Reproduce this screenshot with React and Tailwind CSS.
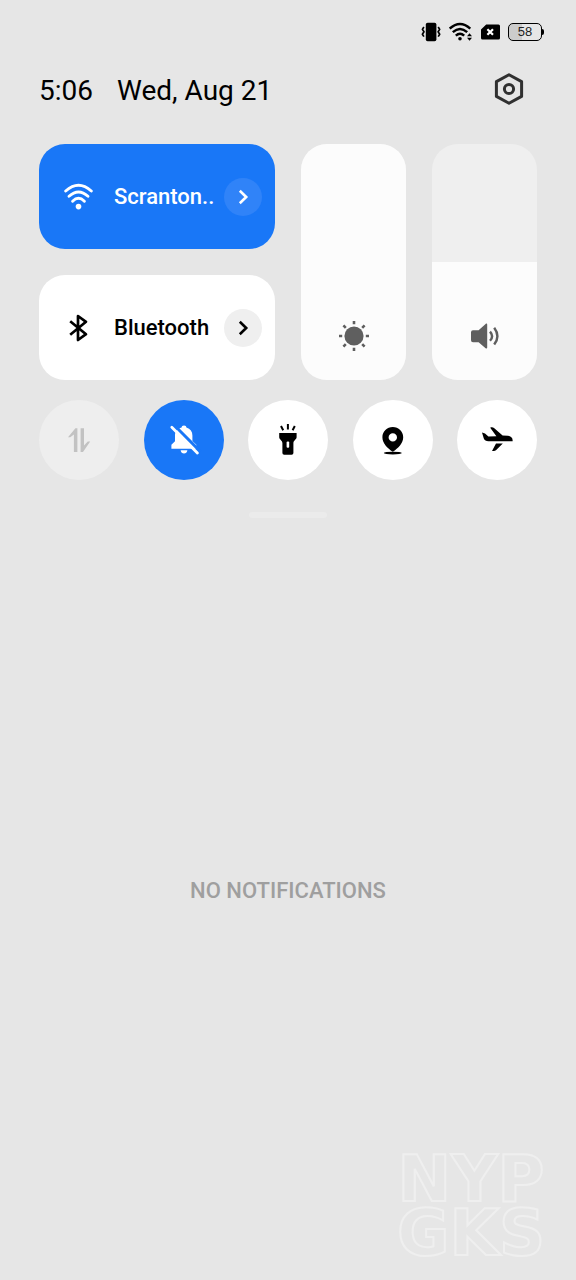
import React, { useState } from 'react';

const VibrateIcon = () => (
    <svg className="w-5 h-5" viewBox="0 0 20 20" fill="none" stroke="black" strokeWidth="1.7" strokeLinejoin="round">
        <rect x="4.8" y="0.8" width="10.6" height="18.4" rx="1.8" fill="black" stroke="none" />
        <path d="M2.9 5 1.4 7.4 3 9.8 1.4 12.2 2.9 14.6" />
        <path d="M17.2 5 18.7 7.4 17.1 9.8 18.7 12.2 17.2 14.6" />
    </svg>
);

const StatusWifiIcon = () => (
    <svg className="w-6 h-5" viewBox="0 0 24 20" fill="none" stroke="black" strokeWidth="2.4">
        <path d="M.7 6.6Q11-2.8 21.3 6.6" />
        <path d="M3.8 10.2Q11 3.6 18.2 10.2" />
        <path d="M6.8 13.6Q11 9.8 15.2 13.6" />
        <circle cx="11" cy="16.8" r="1.8" fill="black" stroke="none" />
        <path d="M18 14.2 20.5 11.2 23 14.2ZM18 15.8 20.5 18.8 23 15.8Z" fill="black" stroke="none" />
    </svg>
);

const NoSimIcon = () => (
    <svg className="w-[19px] h-4" viewBox="0 0 19 16">
        <path d="M5.2.5H17.5A1.5 1.5 0 0 1 19 2V14A1.5 1.5 0 0 1 17.5 15.5H1.5A1.5 1.5 0 0 1 0 14V5.5Z" fill="black" />
        <path d="M6.4 5.2 12 10.8M12 5.2 6.4 10.8" stroke="white" strokeWidth="2.2" />
    </svg>
);

const SettingsIcon = () => (
    <svg className="w-[30px] h-8" viewBox="0 0 30 32" fill="none" stroke="#303030" strokeWidth="3" strokeLinejoin="round">
        <path d="M15 1.8 27.6 8.6V23.4L15 30.2 2.4 23.4V8.6Z" />
        <circle cx="15" cy="16" r="4.6" />
    </svg>
);

const WifiIcon = () => (
    <svg className="w-[30px] h-7" viewBox="0 0 30 28" fill="none" stroke="white" strokeWidth="2.9" strokeLinecap="round">
        <path d="M1.7 8Q14.5-3.6 27.3 8" />
        <path d="M5 13.2Q14.5 4.6 24 13.2" />
        <path d="M8.6 18.2Q14.5 12.4 20.4 18.2" />
        <circle cx="14.5" cy="23.6" r="2.8" fill="white" stroke="none" />
    </svg>
);

const BluetoothIcon = () => (
    <svg className="w-[30px] h-7" viewBox="0 0 30 28" fill="none" stroke="black" strokeWidth="2.7" strokeLinejoin="round">
        <path d="M6.2 7.2 22 20.2 14 26V2L22 7.8 6.2 20.8" />
    </svg>
);

const ChevronIcon = () => (
    <svg className="w-4 h-4" viewBox="0 0 16 16" fill="none" stroke="currentColor" strokeWidth="2.6">
        <path d="M4.8 1.8 11.2 8 4.8 14.2" />
    </svg>
);

const SunIcon = () => (
    <svg className="w-[30px] h-[30px]" viewBox="0 0 30 30" fill="#5f5f5f" stroke="#5f5f5f" strokeWidth="2.6">
        <circle cx="15" cy="15" r="9.6" stroke="none" />
        <path d="M15 0V3.2M15 26.8V30M0 15H3.2M26.8 15H30M4.4 4.4 6.8 6.8M23.2 23.2 25.6 25.6M4.4 25.6 6.8 23.2M23.2 6.8 25.6 4.4" />
    </svg>
);

const SpeakerIcon = () => (
    <svg className="w-[30px] h-[30px]" viewBox="0 0 30 30" fill="#5f5f5f">
        <path d="M3 9.2H8.6L15.6 3C16.4 2.3 17.2 2.6 17.2 3.6V26.6C17.2 27.6 16.4 27.9 15.6 27.2L8.6 21.2H3A2 2 0 0 1 1 19.2V11.2A2 2 0 0 1 3 9.2Z" />
        <path d="M20 10.6Q24.2 15.2 20 19.8M24.2 6.8Q30.6 15.2 24.2 23.6" fill="none" stroke="#5f5f5f" strokeWidth="2.4" />
    </svg>
);

const DataIcon = () => (
    <svg className="w-9 h-9" viewBox="22 22 36 36" fill="#c2c2c2">
        <path d="M36.4 28.2H38.4V52H34.9V34.6L31.2 37.2H29Z" />
        <path d="M41.6 28.2H45V45.6L48.8 41.4H51.2L44 52H41.6Z" />
    </svg>
);

const BellOffIcon = () => (
    <svg className="w-9 h-9" viewBox="22 22 36 36" fill="white">
        <path d="M40 25.4C41.6 25.4 42.3 26.2 42.4 27.6 46.4 28.8 48.4 31.6 48.4 35.6V41L52.3 44.8V48.8H27.4V44.8L31 41.2V35.6C31 31.6 33.6 28.8 37.6 27.6 37.7 26.2 38.4 25.4 40 25.4Z" />
        <path d="M36.6 50.2H43.4C43 52.4 41.8 53.5 40 53.5S37 52.4 36.6 50.2Z" />
        <path d="M29.8 24.8 56.2 51.4" stroke="#1977f7" strokeWidth="3" />
        <path d="M27.8 27.2 53.4 53" stroke="white" strokeWidth="2.8" strokeLinecap="round" />
    </svg>
);

const FlashlightIcon = () => (
    <svg className="w-9 h-9" viewBox="22 22 36 36">
        <path d="M31.2 33H48.6V37.2C48.6 39.4 45.4 40.4 45.4 43V53A1.8 1.8 0 0 1 43.6 54.8H36.2A1.8 1.8 0 0 1 34.4 53V43C34.4 40.4 31.2 39.4 31.2 37.2Z" fill="black" />
        <rect x="38.6" y="41.6" width="2.6" height="6.2" rx="1" fill="white" />
        <path d="M39.9 24V29.4M33 26 35.2 30.2M46.8 26 44.6 30.2" stroke="black" strokeWidth="2" />
    </svg>
);

const LocationIcon = () => (
    <svg className="w-9 h-9" viewBox="22 22 36 36" fill="black">
        <path fillRule="evenodd" d="M39.8 27C45.6 27 50.2 31.4 50.2 37.2 50.2 43.4 45.2 48 39.8 51.8 34.4 48 29.4 43.4 29.4 37.2 29.4 31.4 34 27 39.8 27ZM39.8 33.2A4.2 4.2 0 1 0 39.8 41.6 4.2 4.2 0 1 0 39.8 33.2Z" />
        <ellipse cx="39.8" cy="53.1" rx="9" ry="1.4" />
    </svg>
);

const AirplaneIcon = () => (
    <svg className="w-9 h-9" viewBox="22 22 36 36" fill="black">
        <path d="M25 32.6 28 33.4 31.4 36.6 39.4 36.2 33.2 27.8C34.4 27 36 27.2 37 28L45.6 35.6 51 35.8C54 36.2 56 38 55.6 41.2H31.4C29 41.2 27.6 40.6 26.8 38.6Z" />
        <path d="M39 43.6H45.8L39.2 50C38 51.2 36.6 51.2 35 51Z" />
    </svg>
);

const ConnectionTile = ({ icon, label, active, onToggle }) => (
    <div
        className={`col-span-2 h-[105px] rounded-[26px] flex items-center pl-[25px] pr-[13px] ${
            active ? 'bg-[#1977f7] text-white' : 'bg-white text-black'
        }`}
    >
        <button type="button" onClick={onToggle} className="flex-1 min-w-0 flex items-center gap-5">
            {icon}
            <span className="text-[22px] leading-7 font-medium whitespace-nowrap">{label}</span>
        </button>
        <button
            type="button"
            aria-label={`${label} details`}
            className={`w-[38px] h-[38px] rounded-full flex items-center justify-center ${
                active ? 'bg-[#3083f8]' : 'bg-[#efefef]'
            }`}
        >
            <ChevronIcon />
        </button>
    </div>
);

const LevelSlider = ({ label, icon, value, onChange }) => (
    <label className="relative row-span-2 rounded-[26px] overflow-hidden bg-[#efefef] flex items-end justify-center pb-[29px]">
        <span className="absolute inset-x-0 bottom-0 bg-[#fcfcfc]" style={{ height: `${value}%` }} />
        <span className="relative">{icon}</span>
        <input
            type="range"
            min="0"
            max="100"
            aria-label={label}
            value={value}
            onChange={(e) => onChange(Number(e.target.value))}
            className="absolute inset-0 w-full h-full opacity-0 [writing-mode:vertical-lr] [direction:rtl]"
        />
    </label>
);

const toggles = [
    { id: 'data', label: 'Mobile data', icon: <DataIcon />, style: 'bg-[#eeeeee]', disabled: true },
    { id: 'silent', label: 'Silent', icon: <BellOffIcon />, style: 'bg-[#1977f7]' },
    { id: 'flashlight', label: 'Flashlight', icon: <FlashlightIcon />, style: 'bg-white' },
    { id: 'location', label: 'Location', icon: <LocationIcon />, style: 'bg-white' },
    { id: 'airplane', label: 'Airplane mode', icon: <AirplaneIcon />, style: 'bg-white' },
];

const App = () => {
    const [wifi, setWifi] = useState(true);
    const [bluetooth, setBluetooth] = useState(false);
    const [brightness, setBrightness] = useState(100);
    const [volume, setVolume] = useState(50);

    return (
        <div className="relative min-h-screen flex flex-col bg-[#e6e6e6] font-[Roboto,sans-serif]">
            {/* Status bar */}
            <div className="h-16 pr-8 flex items-center justify-end gap-2">
                <VibrateIcon />
                <StatusWifiIcon />
                <NoSimIcon />
                <div className="flex items-center">
                    <span className="w-[34px] h-[18px] rounded-[5px] border border-black bg-linear-to-r from-[#cccccc] from-40% to-[#e6e6e6] to-40% flex items-center justify-center text-[13px] leading-4 text-[#222222] font-['Liberation_Sans',sans-serif]">
                        58
                    </span>
                    <span className="w-[2px] h-[6px] rounded-r-sm bg-black" />
                </div>
            </div>

            <header className="h-[54px] px-[39px] flex items-center justify-between">
                <div className="flex gap-6 text-[28px] leading-9 text-black">
                    <span>5:06</span>
                    <span>Wed, Aug 21</span>
                </div>
                <button type="button" aria-label="Settings" className="mr-[13px] mb-1">
                    <SettingsIcon />
                </button>
            </header>

            {/* Quick settings */}
            <section className="mt-[26px] px-[39px]">
                <div className="grid grid-cols-4 grid-flow-col grid-rows-2 gap-[26px]">
                    <ConnectionTile icon={<WifiIcon />} label="Scranton.." active={wifi} onToggle={() => setWifi(!wifi)} />
                    <ConnectionTile
                        icon={<BluetoothIcon />}
                        label="Bluetooth"
                        active={bluetooth}
                        onToggle={() => setBluetooth(!bluetooth)}
                    />
                    <LevelSlider label="Brightness" icon={<SunIcon />} value={brightness} onChange={setBrightness} />
                    <LevelSlider label="Volume" icon={<SpeakerIcon />} value={volume} onChange={setVolume} />
                </div>
                <div className="mt-5 flex justify-between">
                    {toggles.map((toggle) => (
                        <button
                            key={toggle.id}
                            type="button"
                            aria-label={toggle.label}
                            disabled={toggle.disabled}
                            className={`w-20 h-20 rounded-full flex items-center justify-center ${toggle.style}`}
                        >
                            {toggle.icon}
                        </button>
                    ))}
                </div>
            </section>
            <div className="mt-8 mx-auto w-[78px] h-[6px] rounded-full bg-[#ebebeb]" />

            <main className="flex-1 pb-4 flex items-center justify-center">
                <p className="text-[22px] leading-7 font-medium text-[#9f9f9f]">NO NOTIFICATIONS</p>
            </main>

            {/* Watermark */}
            <div className="absolute right-3 bottom-5 w-[186px] text-center text-[64px] leading-[54px] font-bold text-transparent font-['DejaVu_Sans',sans-serif] [-webkit-text-stroke:2px_#efefef]">
                <div>NYP</div>
                <div>GKS</div>
            </div>
        </div>
    );
};

export default App;
